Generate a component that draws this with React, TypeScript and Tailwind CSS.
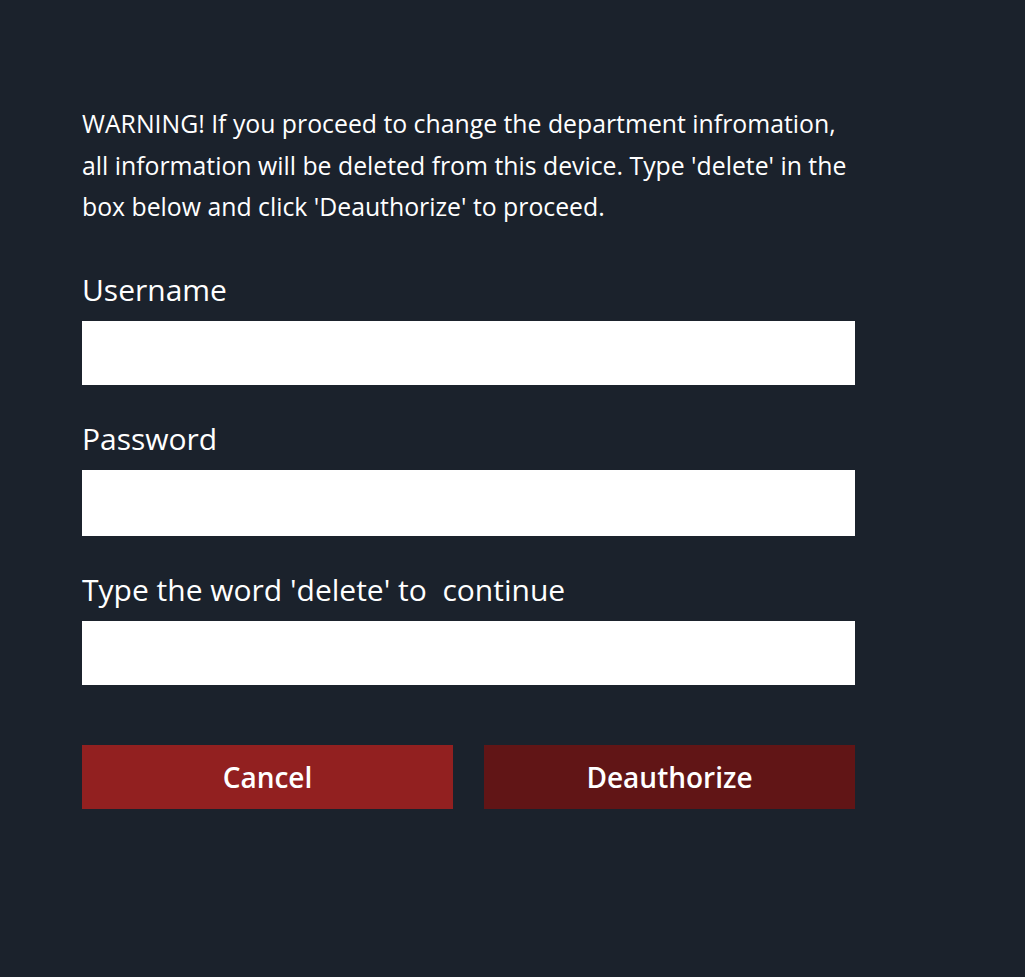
const Field = ({ label, tall }: { label: string; tall?: boolean }) => (
  <div className="flex flex-col">
    <label className="text-[30px] leading-[36px] text-white whitespace-pre">{label}</label>
    <input
      type="text"
      className={`mt-[13px] w-full bg-white outline-none px-3 text-black text-[20px] ${tall ? "h-[66px]" : "h-[64px]"}`}
    />
  </div>
);

const App = () => {
  return (
    <div
      className="min-h-[977px] w-full bg-[#1b222c] text-white"
      style={{ fontFamily: '"Open Sans", "Noto Sans", sans-serif' }}
    >
      <div className="w-[773px] ml-[82px] pt-[103px]">
        <p className="text-[24.8px] leading-[41.5px] text-white whitespace-nowrap">
          WARNING! If you proceed to change the department infromation,
          <br />
          all information will be deleted from this device. Type 'delete' in the
          <br />
          box below and click 'Deauthorize' to proceed.
        </p>
        <div className="mt-[44px] flex flex-col gap-[36px]">
          <Field label="Username" />
          <Field label="Password" tall />
          <Field label="Type the word 'delete' to  continue" />
        </div>
        <div className="mt-[60px] flex gap-[31px]">
          <button className="h-[64px] flex-1 bg-[#922020] text-[28px] leading-[60px] font-semibold text-white">
            Cancel
          </button>
          <button className="h-[64px] flex-1 bg-[#611516] text-[28px] leading-[60px] font-semibold text-white">
            Deauthorize
          </button>
        </div>
      </div>
    </div>
  );
};

export default App;
